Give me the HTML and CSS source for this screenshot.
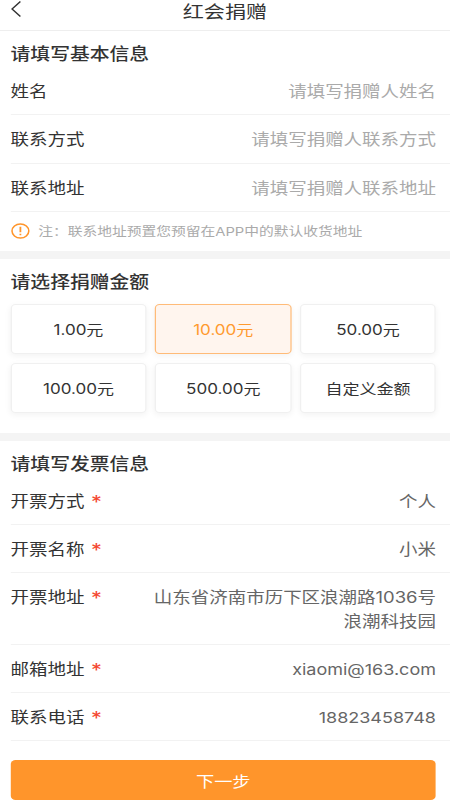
FILE: index.html
```html
<!DOCTYPE html>
<html lang="zh-CN">
<head>
    <meta charset="UTF-8">
    <meta name="viewport" content="width=device-width, initial-scale=1.0">
    <title>红会捐赠</title>
    <link rel="stylesheet" href="styles.css">
</head>
<body>
    <div class="page">
        <header class="top-bar">
            <svg class="back-icon" viewBox="0 0 9 16" width="9" height="16">
                <path d="M8 0.5 L1 8 L8 15.5" fill="none" stroke="#333" stroke-width="1.2"/>
            </svg>
            <h1>红会捐赠</h1>
        </header>

        <section class="block">
            <h2>请填写基本信息</h2>
            <div class="row"><span class="label">姓名</span><span class="hint">请填写捐赠人姓名</span></div>
            <div class="row"><span class="label">联系方式</span><span class="hint">请填写捐赠人联系方式</span></div>
            <div class="row"><span class="label">联系地址</span><span class="hint">请填写捐赠人联系地址</span></div>
            <div class="note">
                <svg class="note-icon" viewBox="0 0 16 16" width="16" height="16">
                    <circle cx="8" cy="8" r="7" fill="none" stroke="#ff952b" stroke-width="1.3"/>
                    <path d="M8 3.8 V9.2 M8 10.8 V12.2" fill="none" stroke="#ff952b" stroke-width="1.5"/>
                </svg>
                <span>注：联系地址预置您预留在APP中的默认收货地址</span>
            </div>
        </section>

        <section class="block amount-block">
            <h2>请选择捐赠金额</h2>
            <div class="amounts">
                <div class="amount">1.00元</div>
                <div class="amount selected">10.00元</div>
                <div class="amount">50.00元</div>
                <div class="amount">100.00元</div>
                <div class="amount">500.00元</div>
                <div class="amount">自定义金额</div>
            </div>
        </section>

        <section class="block invoice-block">
            <h2>请填写发票信息</h2>
            <div class="row"><span class="label">开票方式<i>*</i></span><span class="value">个人</span></div>
            <div class="row"><span class="label">开票名称<i>*</i></span><span class="value">小米</span></div>
            <div class="row"><span class="label">开票地址<i>*</i></span><span class="value">山东省济南市历下区浪潮路1036号<br>浪潮科技园</span></div>
            <div class="row"><span class="label">邮箱地址<i>*</i></span><span class="value latin">xiaomi@163.com</span></div>
            <div class="row"><span class="label">联系电话<i>*</i></span><span class="value latin">18823458748</span></div>
        </section>

        <button class="next">下一步</button>
    </div>
</body>
</html>
```

FILE: styles.css
```css
html, body {
    margin: 0;
    padding: 0;
    height: 800px;
    overflow: hidden;
    background: #fff;
}

/* the whole screen is 375 wide, stretched out to the 450 window */
.page {
    width: 375px;
    transform: scaleX(1.2);
    transform-origin: 0 0;
    font-family: Inter, "Noto Sans CJK SC", sans-serif;
    color: #333;
}

.top-bar {
    height: 30px;
    border-bottom: 1px solid #eee;
    display: flex;
    justify-content: center;
    align-items: center;
    position: relative;
}

.top-bar h1 {
    margin: 0 0 7px;
    font-size: 17.6px;
    font-weight: 400;
    line-height: 21px;
}

.back-icon {
    position: absolute;
    left: 9px;
    top: 1px;
}

.block {
    padding-left: 8.8px;
}

.block h2 {
    margin: 0;
    font-size: 16.5px;
    font-weight: 500;
    line-height: 22px;
    padding-top: 12px;
    height: 24px;
}

.row {
    display: flex;
    justify-content: space-between;
    align-items: flex-start;
    padding: 13px 11.7px 11px 0;
    line-height: 23.25px;
    font-size: 15.4px;
    border-bottom: 1px solid #f2f2f2;
}

.row .label {
    flex-shrink: 0;
    color: #333;
}

.label i {
    color: #f4462f;
    font-size: 18px;
    font-style: normal;
    line-height: 1;
    margin-left: 5.5px;
    vertical-align: -2px;
}

.hint {
    color: #aaa;
    text-align: right;
}

.value {
    color: #666;
    text-align: right;
}

.value.latin {
    font-size: 15px;
}

.note {
    display: flex;
    align-items: center;
    gap: 7px;
    height: 39px;
    font-size: 12.3px;
    color: #aaa;
}

.note-icon {
    flex-shrink: 0;
}

.amount-block {
    border-top: 8px solid #f4f4f4;
    padding-right: 11.7px;
    padding-bottom: 20px;
}

.amount-block h2 {
    height: 33px;
}

.amounts {
    display: grid;
    grid-template-columns: repeat(3, 1fr);
    gap: 9px 7.5px;
}

.amount {
    height: 50px;
    box-sizing: border-box;
    display: flex;
    align-items: center;
    justify-content: center;
    font-size: 14.2px;
    background: #fff;
    border: 1px solid #f0f0f0;
    border-radius: 4px;
    box-shadow: 0 2px 6px rgba(0, 0, 0, 0.05);
}

.amount.selected {
    color: #ff9a2e;
    background: #fff5ee;
    border-color: #ffbb78;
}

.invoice-block {
    border-top: 8px solid #f4f4f4;
}

.next {
    display: block;
    width: 354.5px;
    height: 40px;
    margin: 19px 0 0 8.8px;
    border: 0;
    border-radius: 4px;
    background: #ff952b;
    color: #fff;
    font-family: inherit;
    font-size: 15.2px;
}
```
